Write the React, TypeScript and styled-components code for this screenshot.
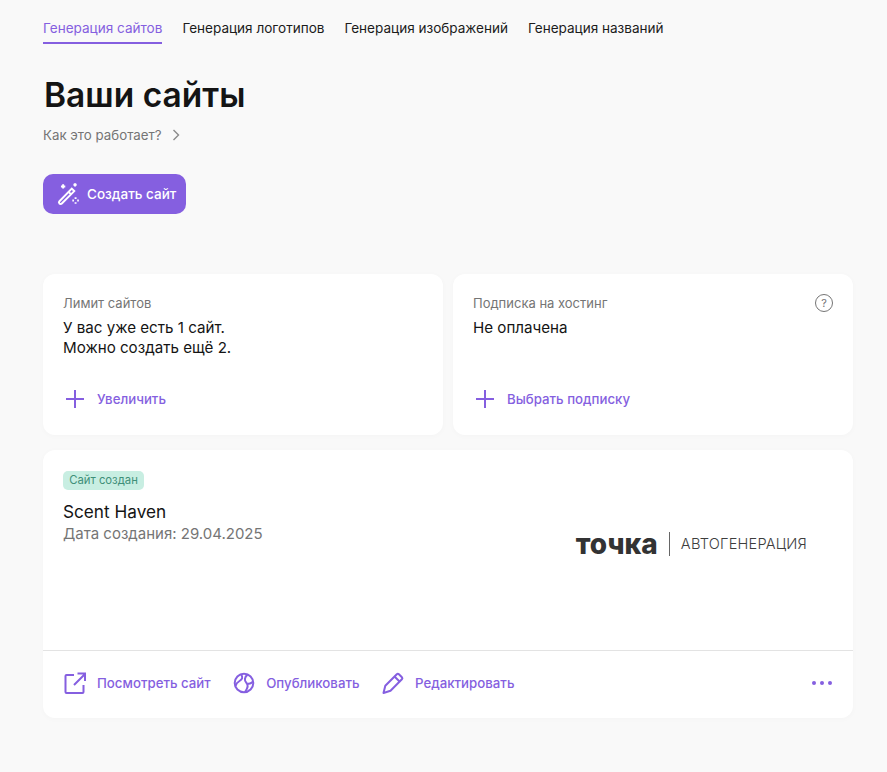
import * as React from 'react';
import styled, { createGlobalStyle } from 'styled-components';

const accent = '#855fe0';
const fontStack = 'Inter, "Noto Sans", sans-serif';

const GlobalStyle = createGlobalStyle`
    html, body {
        margin: 0;
        background-color: #f9f9f9;
        font-family: ${fontStack};
        color: #141414;
    }
    * {
        box-sizing: border-box;
    }
`;

const Page = styled.div`
    width: 887px;
    height: 772px;
    padding: 0 34px 0 43px;
    overflow: hidden;
`;

const Tabs = styled.nav`
    display: flex;
    gap: 20px;
    padding-top: 18px;
`;

const Tab = styled.a<{ $active?: boolean }>`
    height: 26px;
    padding-top: 2px;
    font-size: 13.55px;
    line-height: 17px;
    font-weight: 400;
    white-space: nowrap;
    color: ${p => (p.$active ? accent : '#1c1c1c')};
    border-bottom: 2px solid ${p => (p.$active ? accent : 'transparent')};
`;

const Title = styled.h1`
    margin: 29px 0 0 1px;
    font-size: 33.5px;
    line-height: 44px;
    font-weight: 600;
    color: #141414;
`;

const HowLink = styled.a`
    display: flex;
    align-items: center;
    gap: 10px;
    margin-top: 8px;
    height: 20px;
    font-size: 13.3px;
    color: #757575;
`;

const CreateButton = styled.button`
    display: flex;
    align-items: center;
    gap: 6px;
    width: 143px;
    height: 40px;
    margin-top: 29px;
    padding: 0 0 0 12px;
    border: 0;
    border-radius: 10px;
    background-color: ${accent};
    color: #fff;
    font-family: ${fontStack};
    font-size: 13.5px;
    font-weight: 500;
    white-space: nowrap;
`;

const InfoGrid = styled.div`
    display: grid;
    grid-template-columns: 400px 400px;
    gap: 10px;
    margin-top: 60px;
`;

const Card = styled.section`
    position: relative;
    background-color: #fff;
    border-radius: 12px;
    box-shadow: 0 1px 6px rgba(0, 0, 0, 0.025);
`;

const InfoCard = styled(Card)`
    display: flex;
    flex-direction: column;
    height: 161px;
    padding: 20px 20px 24px;
`;

const Label = styled.div`
    font-size: 13px;
    line-height: 18px;
    color: #757575;
`;

const Value = styled.div`
    margin-top: 6px;
    font-size: 15.15px;
    line-height: 20px;
    color: #141414;
`;

const HelpIcon = styled.span`
    position: absolute;
    top: 20px;
    right: 20px;
    display: flex;
    align-items: center;
    justify-content: center;
    width: 18px;
    height: 18px;
    border: 1px solid #757575;
    border-radius: 50%;
    font-size: 11px;
    color: #757575;
`;

const ActionLink = styled.a`
    display: flex;
    align-items: center;
    gap: 10px;
    font-size: 13.25px;
    font-weight: 500;
    line-height: 24px;
    white-space: nowrap;
    color: ${accent};
`;

const BottomAction = styled(ActionLink)`
    margin-top: auto;
`;

const SiteCard = styled(Card)`
    margin-top: 15px;
    width: 810px;
    height: 268px;
`;

const SiteBody = styled.div`
    display: flex;
    justify-content: space-between;
    height: 201px;
    padding: 21px 20px 0;
    border-bottom: 1px solid #e3e3e3;
`;

const Badge = styled.span`
    display: block;
    width: 81px;
    height: 19px;
    border-radius: 5px;
    background-color: #c8eee2;
    color: #3f8f78;
    font-size: 11.3px;
    line-height: 19px;
    text-align: center;
    white-space: nowrap;
`;

const SiteName = styled.div`
    margin-top: 10px;
    font-size: 17.2px;
    line-height: 24px;
    color: #141414;
`;

const SiteDate = styled.div`
    font-size: 15px;
    line-height: 20px;
    color: #757575;
`;

const Logo = styled.div`
    display: flex;
    align-items: center;
    align-self: flex-start;
    margin: 61px 26px 0 0;
    color: #333;
`;

const LogoMark = styled.span`
    display: flex;
    align-items: center;
    height: 24px;
    padding-right: 11px;
    border-right: 1px solid #666;
    font-family: ${fontStack};
    font-size: 28px;
    line-height: 28px;
    font-weight: 800;
`;

const LogoCaption = styled.span`
    padding-left: 11px;
    font-family: ${fontStack};
    font-size: 14.6px;
    font-weight: 300;
    letter-spacing: 0.2px;
    color: #3d3d3d;
`;

const SiteFooter = styled.div`
    display: flex;
    align-items: center;
    gap: 21.5px;
    height: 67px;
    padding: 0 20px 4px;
`;

const MoreButton = styled.span`
    display: flex;
    gap: 4px;
    margin-left: auto;
    padding-right: 1px;
`;

const Dot = styled.i`
    width: 4px;
    height: 4px;
    border-radius: 50%;
    background-color: ${accent};
`;

const IconSvg = styled.svg`
    flex: 0 0 24px;
    width: 24px;
    height: 24px;
    fill: none;
    stroke: ${accent};
    stroke-width: 2;
`;

const PlusIcon = () => (
    <IconSvg viewBox="0 0 24 24">
        <path d="M12 3v18M3 12h18" />
    </IconSvg>
);

const WandIcon = () => (
    <svg width="26" height="26" viewBox="0 0 24 24" fill="none" stroke="#fff" strokeWidth="1.8">
        <path d="M15.500 7l2.300 2.300L6.300 20.800a1.500 1.500 0 0 1-2.200 0 1.500 1.500 0 0 1 0-2.100z" />
        <path d="M12.500 10l2.300 2.300" />
        <path d="M7.500 3v4M5.500 5h4M18.500 2v3M17 3.500h3M19 15v1.500M19 19.500V21M16 18h1.500M20.500 18H22" />
    </svg>
);

const ExternalIcon = () => (
    <IconSvg viewBox="0 0 24 24">
        <path d="M11 4H3.500a1 1 0 0 0-1 1v16a1 1 0 0 0 1 1h16a1 1 0 0 0 1-1v-7" strokeLinejoin="round" />
        <path d="M11 14L22 3M14.500 2.500H22V10" />
    </IconSvg>
);

const PublishIcon = () => (
    <IconSvg viewBox="0 0 24 24">
        <circle cx="12" cy="12" r="9.300" />
        <path d="M9 3.300C11.500 6.500 10 8.500 7.500 10 5.500 11.200 4 12.500 3.500 15" />
        <path d="M15.500 3.600C12.500 6 12 9.500 14.500 12c2 2 1 5.500-1.500 9" />
        <path d="M15.500 12.500c1.500.5 3.500 0 5-1.500" />
    </IconSvg>
);

const PencilIcon = () => (
    <IconSvg viewBox="0 0 24 24">
        <path d="M2.500 22l1.800-7.300L15.800 3.200a1.500 1.500 0 0 1 2.100 0l3 3a1.500 1.500 0 0 1 0 2.100L9.500 19.800z" strokeLinejoin="round" />
        <path d="M13.500 5.500l5 5" />
    </IconSvg>
);

const ChevronIcon = () => (
    <svg width="8" height="12" viewBox="0 0 8 12" fill="none" stroke="#8a8a8a" strokeWidth="1.4">
        <path d="M1.500 1l5 5-5 5" />
    </svg>
);

export default function App() {
    return (
        <Page>
            <GlobalStyle />
            <Tabs>
                <Tab $active>Генерация сайтов</Tab>
                <Tab>Генерация логотипов</Tab>
                <Tab>Генерация изображений</Tab>
                <Tab>Генерация названий</Tab>
            </Tabs>
            <Title>Ваши сайты</Title>
            <HowLink>
                Как это работает?
                <ChevronIcon />
            </HowLink>
            <CreateButton>
                <WandIcon />
                Создать сайт
            </CreateButton>
            <InfoGrid>
                <InfoCard>
                    <Label>Лимит сайтов</Label>
                    <Value>
                        У вас уже есть 1 сайт.
                        <br />
                        Можно создать ещё 2.
                    </Value>
                    <BottomAction>
                        <PlusIcon />
                        Увеличить
                    </BottomAction>
                </InfoCard>
                <InfoCard>
                    <Label>Подписка на хостинг</Label>
                    <HelpIcon>?</HelpIcon>
                    <Value>Не оплачена</Value>
                    <BottomAction>
                        <PlusIcon />
                        Выбрать подписку
                    </BottomAction>
                </InfoCard>
            </InfoGrid>
            <SiteCard>
                <SiteBody>
                    <div>
                        <Badge>Сайт создан</Badge>
                        <SiteName>Scent Haven</SiteName>
                        <SiteDate>Дата создания: 29.04.2025</SiteDate>
                    </div>
                    <Logo>
                        <LogoMark>точка</LogoMark>
                        <LogoCaption>АВТОГЕНЕРАЦИЯ</LogoCaption>
                    </Logo>
                </SiteBody>
                <SiteFooter>
                    <ActionLink>
                        <ExternalIcon />
                        Посмотреть сайт
                    </ActionLink>
                    <ActionLink>
                        <PublishIcon />
                        Опубликовать
                    </ActionLink>
                    <ActionLink>
                        <PencilIcon />
                        Редактировать
                    </ActionLink>
                    <MoreButton>
                        <Dot />
                        <Dot />
                        <Dot />
                    </MoreButton>
                </SiteFooter>
            </SiteCard>
        </Page>
    );
}
